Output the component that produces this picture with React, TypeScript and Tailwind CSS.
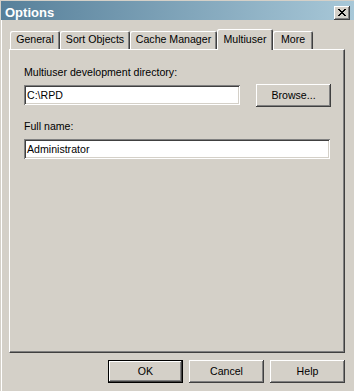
import React from "react";

const raised =
  "shadow-[inset_-1px_-1px_0_#404040,inset_1px_1px_0_#ffffff,inset_-2px_-2px_0_#808080,inset_2px_2px_0_#d4d0c8]";
const sunken =
  "shadow-[inset_1px_1px_0_#808080,inset_-1px_-1px_0_#ffffff,inset_2px_2px_0_#404040,inset_-2px_-2px_0_#d4d0c8]";

function Tab({ label, w, selected }: { label: string; w: string; selected?: boolean }) {
  return (
    <div
      className={
        "relative flex items-start justify-center bg-[#d4d0c8] rounded-t-[2px] " +
        "shadow-[inset_1px_1px_0_#ffffff,inset_-1px_0_0_#404040,inset_-2px_0_0_#808080] " +
        w +
        (selected ? " h-[21px] -mb-px z-10 pt-[4px]" : " h-[18px] pt-[2px]")
      }
    >
      <span className="leading-[13px]">{label}</span>
    </div>
  );
}

function Btn({ label, def }: { label: string; def?: boolean }) {
  return (
    <div
      className={
        "w-[75px] h-[23px] flex items-center justify-center bg-[#d4d0c8] " +
        (def
          ? "shadow-[inset_0_0_0_1px_#000000,inset_-2px_-2px_0_#404040,inset_2px_2px_0_#ffffff,inset_-3px_-3px_0_#808080]"
          : raised)
      }
    >
      <span className="leading-[13px]">{label}</span>
    </div>
  );
}

export default function App() {
  return (
    <div
      className="w-[354px] h-[391px] bg-[#d4d0c8] pt-px overflow-hidden text-black text-[10.6px]"
      style={{ fontFamily: '"Liberation Sans", Arial, sans-serif' }}
    >
      <div className="h-[19px] ml-px flex items-start justify-between pl-[4px] pr-[4px] bg-gradient-to-r from-[#57809a] to-[#a8c8d8]">
        <span className="mt-[2px] leading-[19px] text-[13px] font-bold text-white">Options</span>
        <div className={"mt-[5px] w-[16px] h-[14px] flex items-center justify-center bg-[#d4d0c8] " + raised}>
          <svg width="8" height="7" viewBox="0 0 8 7" className="-ml-px -mt-px">
            <path d="M0 0h2v1h1v1h2V1h1V0h2v1H7v1H6v1H5v1h1v1h1v1h1v1H6V6H5V5H3v1H2v1H0V6h1V5h1V4h1V3H2V2H1V1H0z" fill="#000" />
          </svg>
        </div>
      </div>
      <div className="ml-px border-l border-white pl-[7px] pt-[9px] h-[371px] flex flex-col">
        <div className="h-[20px] pl-px flex items-end">
          <Tab label="General" w="w-[50px]" />
          <Tab label="Sort Objects" w="w-[70px]" />
          <Tab label="Cache Manager" w="w-[87px]" />
          <Tab label="Multiuser" w="w-[56px]" selected />
          <Tab label="More" w="w-[40px]" />
        </div>
        <div className="w-[336px] h-[304px] border-t border-l border-white border-r border-b border-r-[#404040] border-b-[#404040] shadow-[inset_-1px_-1px_0_#808080] pl-[14px] pt-[16px] flex flex-col">
          <div className="leading-[13px]">Multiuser development directory:</div>
          <div className="mt-[5px] flex items-start gap-[16px]">
            <div className={"mt-px w-[216px] h-[20px] bg-white pl-[3px] flex items-center " + sunken}>
              <span className="leading-[13px]">C:\RPD</span>
            </div>
            <Btn label="Browse..." />
          </div>
          <div className="mt-[13px] leading-[13px]">Full name:</div>
          <div className={"mt-[6px] w-[306px] h-[20px] bg-white pl-[3px] flex items-center " + sunken}>
            <span className="leading-[13px]">Administrator</span>
          </div>
        </div>
        <div className="w-[336px] mt-[7px] flex justify-end gap-[6px]">
          <Btn label="OK" def />
          <Btn label="Cancel" />
          <Btn label="Help" />
        </div>
      </div>
    </div>
  );
}
